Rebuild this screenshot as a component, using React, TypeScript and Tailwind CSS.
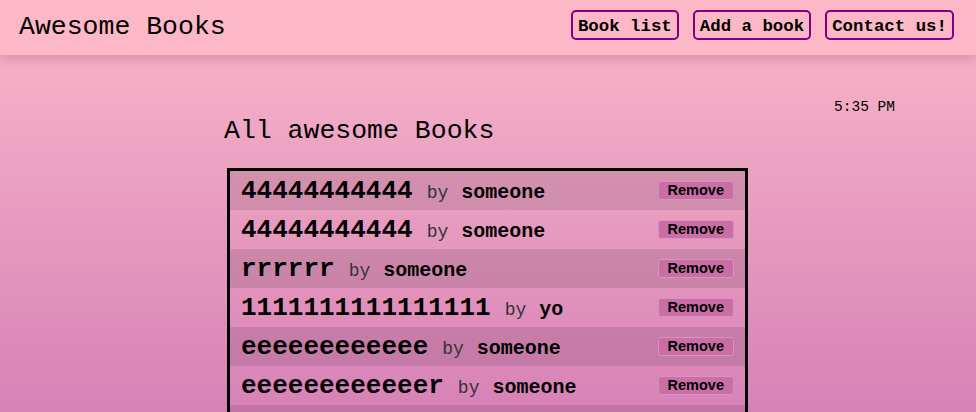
import React from "react";

const books = [
  { t: "44444444444", a: "someone" },
  { t: "44444444444", a: "someone" },
  { t: "rrrrrr", a: "someone" },
  { t: "1111111111111111", a: "yo" },
  { t: "eeeeeeeeeeee", a: "someone" },
  { t: "eeeeeeeeeeeer", a: "someone" },
  { t: "qqqqqqq", a: "someone" },
];

export default function App() {
  return (
    <div
      className="min-h-screen w-full bg-gradient-to-b from-[#fab8c9] to-[#d47db5] text-black"
      style={{ fontFamily: '"Liberation Mono", "Courier New", monospace' }}
    >
      <header className="relative z-10 h-[55px] flex items-center justify-between pl-[19px] pr-[22px] bg-[#fdb8c8] shadow-[0_4px_12px_rgba(120,40,70,0.25)]">
        <h1 className="text-[26.5px] leading-[30px] font-normal mt-[-1px]">Awesome Books</h1>
        <nav className="flex items-center gap-[14px] mt-[-5px]">
          {["Book list", "Add a book", "Contact us!"].map((l) => (
            <button
              key={l}
              className="h-[30px] px-[5px] pt-[3px] border-2 border-[#800080] rounded-[5px] text-[17.4px] font-bold leading-none bg-transparent"
              style={{ fontFamily: '"Liberation Mono", monospace' }}
            >
              {l}
            </button>
          ))}
        </nav>
      </header>
      <main className="flex flex-col">
        <div className="flex justify-end pr-[81px] mt-[44px] text-[14.5px] leading-[16px]">5:35 PM</div>
        <h2 className="ml-[224px] mt-[1px] text-[26.5px] leading-[30px] font-normal">All awesome Books</h2>
        <ul className="ml-[227px] mt-[22px] w-[521px] border-[3px] border-black">
          {books.map((b, i) => (
            <li
              key={i}
              className={`h-[39px] flex items-center justify-between pl-[11px] pr-[11px] ${i % 2 === 0 ? "bg-black/10" : "bg-transparent"}`}
            >
              <div className="flex items-baseline">
                <span className="text-[26px] font-bold leading-none">{b.t}</span>
                <span className="ml-[14px] text-[18px] text-[#333] leading-none">by</span>
                <span className="ml-[13px] text-[20px] font-bold leading-none">{b.a}</span>
              </div>
              <button
                className="h-[19px] px-[9px] rounded-[3px] bg-[#c96fa6] border border-[#dc90c2] text-[14.5px] font-bold leading-none text-black"
                style={{ fontFamily: '"Liberation Sans", Arial, sans-serif' }}
              >
                Remove
              </button>
            </li>
          ))}
        </ul>
      </main>
    </div>
  );
}
